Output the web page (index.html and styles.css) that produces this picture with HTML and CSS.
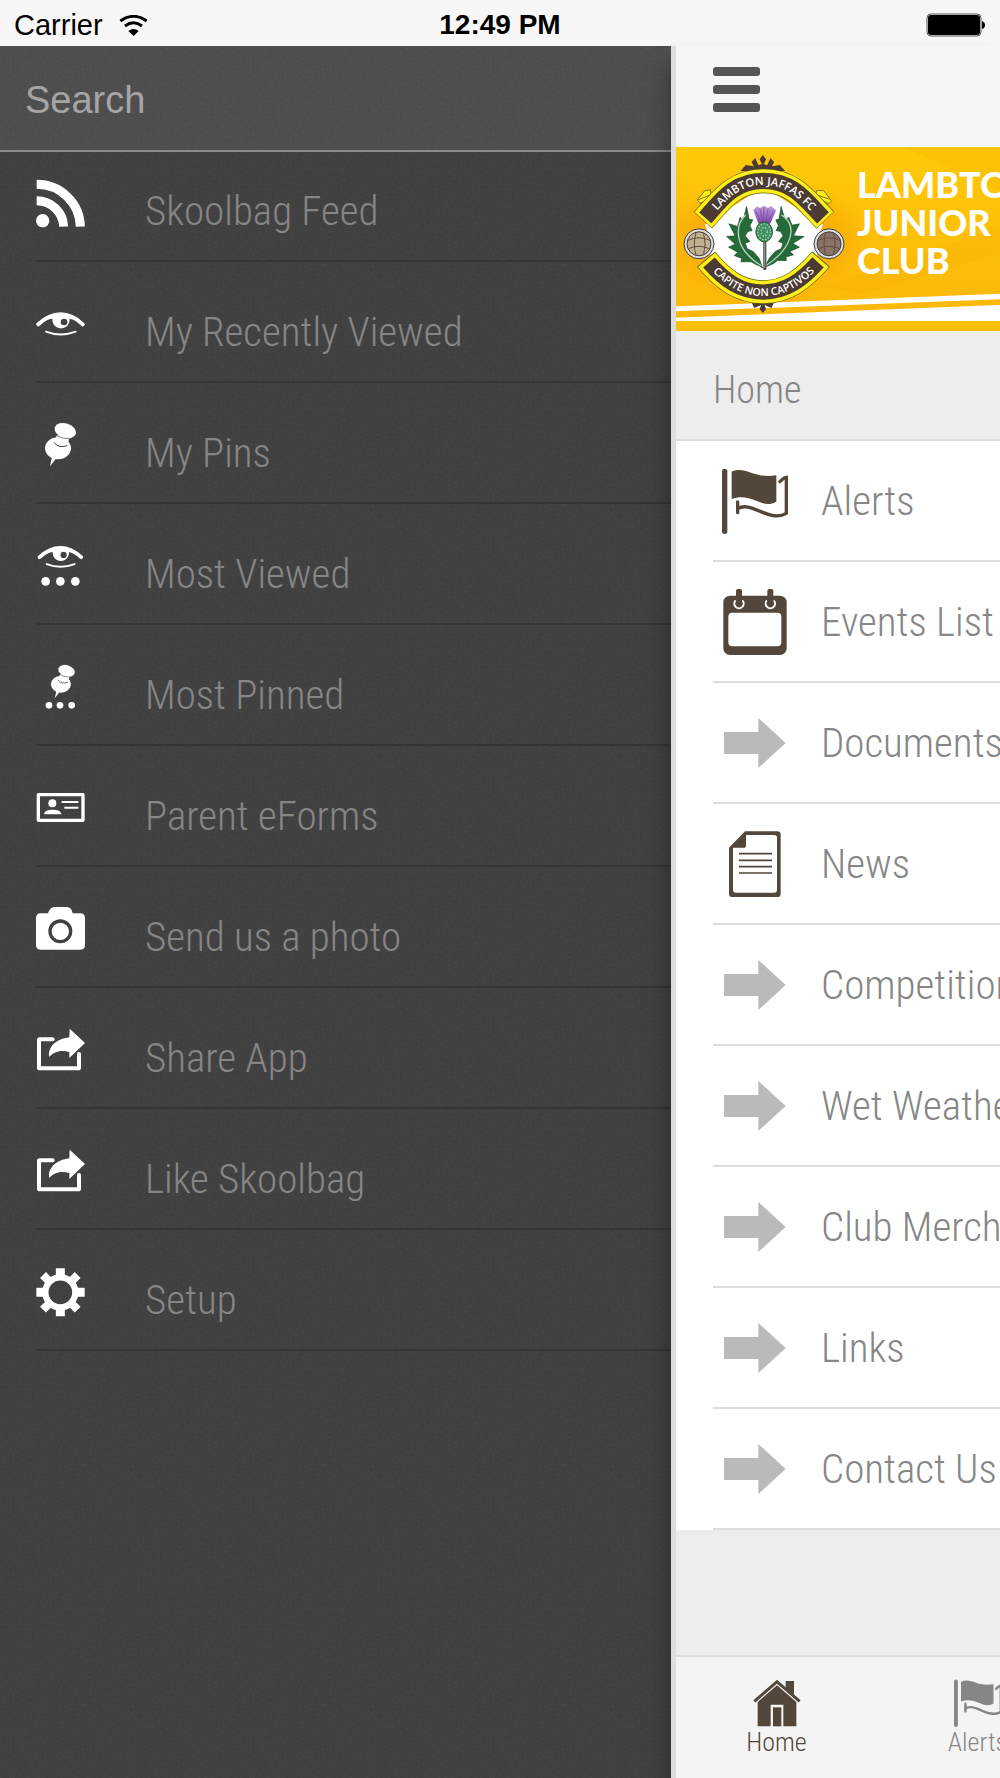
FILE: index.html
```html
<!DOCTYPE html>
<html lang="en">
<head>
    <meta charset="UTF-8">
    <meta name="viewport" content="width=device-width, initial-scale=1.0">
    <title>Skoolbag</title>
    <link rel="stylesheet" href="styles.css">
</head>
<body>

    <!-- Shared icons -->
    <svg class="sprite" aria-hidden="true">
        <symbol id="eye" viewBox="0 0 147 147">
            <path d="M7 73C50 33 98 33 140 73" fill="none" stroke="currentColor" stroke-width="12" stroke-linecap="round"/>
            <path d="M24 62C55 34 92 34 123 62C92 51 55 51 24 62Z" fill="currentColor"/>
            <path fill-rule="evenodd" d="M52 46A26 27 0 1 0 98 46ZM84 56A10 10 0 1 1 84 76A10 10 0 1 1 84 56Z" fill="currentColor"/>
            <path d="M30 95Q74 112 119 95" fill="none" stroke="currentColor" stroke-width="6" stroke-linecap="round"/>
        </symbol>
        <symbol id="pin" viewBox="0 0 147 147">
            <ellipse cx="66" cy="82" rx="39" ry="33" fill="currentColor"/>
            <path d="M48 108L42 136L62 110Z" fill="currentColor"/>
            <path d="M63 42L53 66Q66 86 94 76L100 50Z" fill="currentColor"/>
            <path d="M54 64Q66 83 94 74" fill="none" stroke="#404040" stroke-width="3"/>
            <ellipse cx="88" cy="29" rx="33" ry="22" transform="rotate(18 88 29)" fill="currentColor"/>
            <path d="M61 43Q76 54 100 53" fill="none" stroke="#404040" stroke-width="2"/>
        </symbol>
        <symbol id="share" viewBox="0 0 147 147">
            <path d="M50 40H11Q9 40 9 42V125Q9 127 11 127H127Q129 127 129 125V84" fill="none" stroke="currentColor" stroke-width="12" stroke-linecap="round"/>
            <path d="M101 8L147 51L100 96V78C72 70 52 79 40 93C34 64 60 39 100 34Z" fill="currentColor"/>
        </symbol>
        <symbol id="flag" viewBox="0 0 198 198">
            <path d="M8 10V190" stroke="currentColor" stroke-width="16" stroke-linecap="round"/>
            <path d="M29 11C76 -7 86 32 163 22V101C120 127 90 71 29 93Z" fill="currentColor"/>
            <path d="M47 102V134M47 122C88 96 140 166 193 136V28C183 29 181 34 174 41" fill="none" stroke="currentColor" stroke-width="10" stroke-linecap="round"/>
        </symbol>
        <symbol id="arrow" viewBox="0 0 198 198">
            <path d="M6 66H109V24L191 99L109 174V132H6Z" fill="currentColor"/>
        </symbol>
    </svg>

    <!-- Status bar -->
    <header class="status-bar">
        <div class="carrier">
            <span>Carrier</span>
            <svg class="wifi" viewBox="0 0 87 63">
                <path d="M4 18Q44 -10 83 18" fill="none" stroke="#000" stroke-width="9"/>
                <path d="M18 33Q44 14 69 33" fill="none" stroke="#000" stroke-width="9"/>
                <path d="M28 48Q44 36 59 48L44 63Z"/>
            </svg>
        </div>
        <time>12:49 PM</time>
        <svg class="battery" viewBox="0 0 60 24">
            <rect x="1" y="1" width="54" height="22" rx="4" fill="none" stroke="#555" stroke-width="1"/>
            <rect x="2" y="2" width="52" height="20" rx="3"/>
            <path d="M56 8Q59 9 59 12T56 16Z"/>
        </svg>
    </header>

    <div class="app">

        <!-- Side drawer -->
        <aside class="drawer">
            <form class="search">
                <input type="search" placeholder="Search" aria-label="Search">
            </form>
            <nav class="menu">
                <a href="#">
                    <svg viewBox="0 0 147 147">
                        <circle cx="20" cy="125" r="20" fill="#fff"/>
                        <path d="M2 65A81 81 0 0 1 83 143M2 16A131 129 0 0 1 133 143" fill="none" stroke="#fff" stroke-width="27"/>
                    </svg>
                    <span>Skoolbag Feed</span>
                </a>
                <a href="#">
                    <svg><use href="#eye"/></svg>
                    <span>My Recently Viewed</span>
                </a>
                <a href="#">
                    <svg><use href="#pin"/></svg>
                    <span>My Pins</span>
                </a>
                <a href="#">
                    <svg viewBox="0 0 147 147">
                        <use href="#eye" x="4" y="-23" width="138" height="138"/>
                        <circle cx="29" cy="118" r="13" fill="#fff"/>
                        <circle cx="73" cy="118" r="13" fill="#fff"/>
                        <circle cx="118" cy="118" r="13" fill="#fff"/>
                    </svg>
                    <span>Most Viewed</span>
                </a>
                <a href="#">
                    <svg viewBox="0 0 147 147">
                        <use href="#pin" x="24" y="1" width="113" height="113"/>
                        <circle cx="39" cy="127" r="10" fill="#fff"/>
                        <circle cx="72" cy="127" r="10" fill="#fff"/>
                        <circle cx="107" cy="127" r="10" fill="#fff"/>
                    </svg>
                    <span>Most Pinned</span>
                </a>
                <a href="#">
                    <svg viewBox="0 0 147 147">
                        <rect x="7" y="32" width="134" height="77" rx="1" fill="none" stroke="#fff" stroke-width="10"/>
                        <circle cx="49" cy="58" r="12" fill="#fff"/>
                        <path d="M24 91C25 80 36 77 50 77S75 80 76 91Z" fill="#fff"/>
                        <path d="M77 54H127M85 71H127" stroke="#fff" stroke-width="6"/>
                    </svg>
                    <span>Parent eForms</span>
                </a>
                <a href="#">
                    <svg viewBox="0 0 147 147">
                        <path d="M14 25H36Q42 6 56 6H93Q106 6 110 25H133Q147 25 147 39V120Q147 134 133 134H14Q0 134 0 120V39Q0 25 14 25Z" fill="#fff"/>
                        <circle cx="73" cy="79" r="31" fill="none" stroke="#404040" stroke-width="10"/>
                    </svg>
                    <span>Send us a photo</span>
                </a>
                <a href="#">
                    <svg><use href="#share"/></svg>
                    <span>Share App</span>
                </a>
                <a href="#">
                    <svg><use href="#share"/></svg>
                    <span>Like Skoolbag</span>
                </a>
                <a href="#">
                    <svg viewBox="0 0 147 147">
                        <circle cx="73" cy="73" r="45" fill="none" stroke="#fff" stroke-width="19"/>
                        <path d="M73 1V24M73 122V145M1 73H24M122 73H146" stroke="#fff" stroke-width="27"/>
                        <path d="M21 21L40 40M106 106L125 125M125 21L106 40M40 106L21 125" stroke="#fff" stroke-width="25"/>
                    </svg>
                    <span>Setup</span>
                </a>
            </nav>
        </aside>

        <!-- Main page, pushed to the right -->
        <main class="page">
            <div class="toolbar">
                <button class="menu-button" type="button" aria-label="Menu">
                    <i></i><i></i><i></i>
                </button>
            </div>

            <div class="banner">
                <svg class="banner-back" viewBox="0 0 972 552" preserveAspectRatio="none">
                    <defs>
                        <linearGradient id="gold" x1="0" y1="0" x2="0" y2="1">
                            <stop offset="0" stop-color="#fec907"/>
                            <stop offset="1" stop-color="#fbb60a"/>
                        </linearGradient>
                        <radialGradient id="glow" cx="0.27" cy="0.5" r="0.34">
                            <stop offset="0.5" stop-color="#f79a08" stop-opacity="0.7"/>
                            <stop offset="1" stop-color="#f9a408" stop-opacity="0"/>
                        </radialGradient>
                    </defs>
                    <rect width="972" height="552" fill="url(#gold)"/>
                    <rect width="972" height="552" fill="url(#glow)"/>
                    <path d="M440 420L972 240V320L560 440Z" fill="#f6a800" opacity="0.2"/>
                    <path d="M680 0L972 130V0Z" fill="#f6b400" opacity="0.25"/>
                    <path d="M0 478L972 440V457L0 493Z" fill="#fff"/>
                    <path d="M0 512L972 474V523H0Z" fill="#fff"/>
                    <rect y="523" width="972" height="29" fill="#fdbf07"/>
                </svg>

                <svg class="crest" viewBox="40 45 485 475" role="img" aria-label="Lambton Jaffas FC crest">
                    <defs>
                        <path id="motto-top" d="M104 254C160 195 195 135 281 135S402 195 462 254"/>
                        <path id="motto-bottom" d="M112 378C160 432 210 469 281 469S400 432 452 378"/>
                        <linearGradient id="bloom" x1="0" y1="0" x2="0" y2="1">
                            <stop offset="0" stop-color="#c3a3dc"/>
                            <stop offset="1" stop-color="#7a3fa3"/>
                        </linearGradient>
                    </defs>
                    <!-- finials -->
                    <g fill="#4c3b33">
                        <path d="M279 45L289 58L282 72L292 76L302 54L313 66L306 79L330 75L346 92L279 100L212 92L228 75L252 79L245 66L256 54L266 76L276 72L269 58Z"/>
                        <path d="M279 520L289 508L284 496L305 505L312 490H246L253 505L274 496L269 508Z"/>
                    </g>
                    <!-- scroll ends -->
                    <g fill="#fdf01a" stroke="#8a7411" stroke-width="3">
                        <path d="M82 180L105 152L122 150L124 172L112 194L92 192Z"/>
                        <path d="M486 184L462 152L440 152L438 174L454 194L476 192Z"/>
                    </g>
                    <path d="M84 180L118 166M90 190L120 178M480 178L444 166M476 190L448 178" stroke="#8a7411" stroke-width="3"/>
                    <!-- shield -->
                    <path d="M105 255L280 140L460 255L438 310L445 365L280 440L118 365L126 310Z" fill="#fff"/>
                    <path d="M99 241C150 185 190 123 281 123S412 185 467 241" fill="none" stroke="#6b6411" stroke-width="74"/>
                    <path d="M100 240C150 185 190 123 281 123S412 185 466 240" fill="none" stroke="#fdf01a" stroke-width="70"/>
                    <path d="M106 234C152 183 190 123 281 123S410 183 460 234" fill="none" stroke="#4c3b33" stroke-width="49"/>
                    <path d="M108 358C160 420 210 457 280 457S400 420 454 358" fill="none" stroke="#6b6411" stroke-width="71"/>
                    <path d="M110 360C160 420 210 457 280 457S400 420 452 360" fill="none" stroke="#fdf01a" stroke-width="67"/>
                    <path d="M117 368C164 422 212 457 280 457S396 422 445 368" fill="none" stroke="#4c3b33" stroke-width="46"/>
                    <text class="motto" font-size="34" text-anchor="middle"><textPath href="#motto-top" startOffset="50%">LAMBTON JAFFAS FC</textPath></text>
                    <text class="motto" font-size="32" text-anchor="middle"><textPath href="#motto-bottom" startOffset="50%">CAPITE NON CAPTIVOS</textPath></text>
                    <!-- footballs -->
                    <g stroke="#3e3a3a" stroke-width="3">
                        <circle cx="87" cy="312" r="45" fill="#ddd"/>
                        <circle cx="87" cy="312" r="36" fill="#c2b190"/>
                        <circle cx="478" cy="312" r="45" fill="#ddd"/>
                        <circle cx="478" cy="312" r="36" fill="#8c7266"/>
                        <path d="M53 302Q87 286 121 302M55 327Q87 312 119 327M78 278Q68 312 78 346M101 280Q110 312 101 344M444 302Q478 286 512 302M446 327Q478 312 510 327M468 278Q458 312 468 346M492 280Q501 312 492 344" fill="none" stroke="#5d4d42" stroke-width="3"/>
                    </g>
                    <!-- thistle -->
                    <g fill="#256b39" stroke="#174625" stroke-width="2">
                        <path d="M278 385C268 376 256 375 244 366L213 366L216 356L193 347L204 337L176 322L196 313L170 290L196 288L177 252L203 260L211 232L220 241L230 200L238 238L249 240L240 258L247 272L234 275L226 288L240 305L226 310L232 327L250 335L268 356Z"/>
                        <path d="M284 385C294 376 312 375 322 362L350 362L348 352L371 345L360 335L389 322L369 311L403 290L371 288L389 252L367 256L357 232L346 241L334 200L328 238L318 240L326 258L319 272L332 275L340 288L326 305L340 310L334 327L316 335L298 356Z"/>
                    </g>
                    <path d="M274 378Q215 340 207 295T228 225M288 378Q346 340 360 295T335 225" fill="none" stroke="#b9d3bb" stroke-width="4"/>
                    <path d="M285 390V305" stroke="#333" stroke-width="9"/>
                    <path d="M285 385V305" stroke="#bbb" stroke-width="3"/>
                    <path d="M250 210L262 199L270 204L282 197L294 204L304 198L319 212L301 252H266Z" fill="url(#bloom)"/>
                    <path d="M257 214L275 248M270 206L280 248M282 203V248M295 206L287 248M311 214L293 248" stroke="#8950b0" stroke-width="3"/>
                    <ellipse cx="283" cy="276" rx="25" ry="30" fill="#3f8f60" stroke="#1d5a36" stroke-width="3"/>
                    <ellipse cx="283" cy="276" rx="19" ry="24" fill="none" stroke="#a9dab8" stroke-width="4" stroke-dasharray="4 5"/>
                    <ellipse cx="283" cy="276" rx="9" ry="13" fill="none" stroke="#a9dab8" stroke-width="4" stroke-dasharray="4 5"/>
                </svg>

                <h1>LAMBTON<br>JUNIOR<br>CLUB</h1>
            </div>

            <h2>Home</h2>

            <nav class="list">
                <a class="dark" href="#">
                    <svg><use href="#flag"/></svg>
                    <span>Alerts</span>
                </a>
                <a class="dark" href="#">
                    <svg viewBox="0 0 198 198">
                        <rect x="4" y="20" width="190" height="178" rx="20" fill="currentColor"/>
                        <rect x="19" y="71" width="159" height="101" rx="12" fill="#fff"/>
                        <path d="M41 34A14 14 0 1 0 61 34M135 34A14 14 0 1 0 155 34" fill="none" stroke="#fff" stroke-width="6"/>
                        <rect x="42" y="0" width="18" height="51" rx="6" fill="currentColor"/>
                        <rect x="136" y="0" width="18" height="51" rx="6" fill="currentColor"/>
                    </svg>
                    <span>Events List</span>
                </a>
                <a href="#">
                    <svg><use href="#arrow"/></svg>
                    <span>Documents</span>
                </a>
                <a class="dark" href="#">
                    <svg viewBox="0 0 198 198">
                        <path fill-rule="evenodd" d="M69 1H166Q176 1 176 11V188Q176 198 166 198H31Q21 198 21 188V50ZM72 12V44Q72 50 67 50H33V176Q33 185 42 185H157Q165 185 165 176V20Q165 12 157 12Z" fill="currentColor"/>
                        <path d="M51 68H150M51 88H150M51 107H150M51 126H150" stroke="currentColor" stroke-width="5"/>
                    </svg>
                    <span>News</span>
                </a>
                <a href="#">
                    <svg><use href="#arrow"/></svg>
                    <span>Competitions</span>
                </a>
                <a href="#">
                    <svg><use href="#arrow"/></svg>
                    <span>Wet Weather</span>
                </a>
                <a href="#">
                    <svg><use href="#arrow"/></svg>
                    <span>Club Merchandise</span>
                </a>
                <a href="#">
                    <svg><use href="#arrow"/></svg>
                    <span>Links</span>
                </a>
                <a href="#">
                    <svg><use href="#arrow"/></svg>
                    <span>Contact Us</span>
                </a>
            </nav>

            <nav class="tabs">
                <a class="dark" href="#">
                    <svg viewBox="0 0 144 144">
                        <path d="M4 67L72 8L140 67" fill="none" stroke="currentColor" stroke-width="9"/>
                        <path d="M98 6H123V50L98 28Z" fill="currentColor"/>
                        <path d="M72 19L130 69V142H91V77H53V142H14V69Z" fill="currentColor"/>
                        <rect x="60" y="85" width="25" height="57" fill="currentColor"/>
                    </svg>
                    <span>Home</span>
                </a>
                <a href="#">
                    <svg><use href="#flag"/></svg>
                    <span>Alerts</span>
                </a>
            </nav>
        </main>
    </div>

</body>
</html>
```
FILE: styles.css
```css
* {
    box-sizing: border-box;
}

body {
    margin: 0;
    min-height: 100vh;
    display: flex;
    flex-direction: column;
    overflow-x: hidden;
    background: #f7f7f7;
    font-family: "Roboto Condensed", Roboto, sans-serif;
    font-weight: 300;
    color: #868686;
}

a {
    color: inherit;
    text-decoration: none;
}

.sprite {
    display: none;
}

/* Status bar */
.status-bar {
    display: grid;
    grid-template-columns: 1fr auto 1fr;
    align-items: center;
    height: 46px;
    padding: 4px 14px 0;
    font-family: "Liberation Sans", Arial, sans-serif;
    font-size: 28px;
    font-weight: 400;
    line-height: 32px;
    color: #000;
}

.status-bar time {
    font-weight: 700;
}

.carrier {
    display: flex;
    align-items: center;
    gap: 16px;
    font-size: 29px;
}

.wifi {
    width: 29px;
    height: 21px;
}

.battery {
    width: 60px;
    height: 24px;
    justify-self: end;
}

.app {
    flex: 1;
    display: flex;
}

/* Side drawer */
.drawer {
    flex: 0 0 67.1%;
    background-color: #3c3c3c;
    background-image: url("data:image/svg+xml,%3Csvg xmlns='http://www.w3.org/2000/svg' width='240' height='240'%3E%3Cfilter id='n'%3E%3CfeTurbulence type='fractalNoise' baseFrequency='0.4' numOctaves='2' stitchTiles='stitch'/%3E%3C/filter%3E%3Crect width='240' height='240' filter='url(%23n)' opacity='0.08'/%3E%3C/svg%3E");
}

.search {
    height: 106px;
    border-bottom: 2px solid #8c8c8c;
    background: rgba(255, 255, 255, 0.07);
}

.search input {
    width: 100%;
    height: 100%;
    padding: 4px 25px 0;
    border: 0;
    outline: 0;
    appearance: none;
    background: none;
    font: 38px "Liberation Sans", Arial, sans-serif;
    color: #fff;
}

.search input::placeholder {
    color: #a5a5a5;
}

.menu {
    margin-top: -11px;
    padding-left: 36px;
}

.menu a,
.list a {
    display: flex;
    align-items: center;
    height: 121px;
    border-bottom: 2px solid #353535;
    font-size: 41px;
    line-height: 48px;
    white-space: nowrap;
}

.menu a {
    padding-top: 6px;
}

.menu svg {
    flex: none;
    width: 49px;
    height: 49px;
    color: #fff;
}

.menu span {
    padding: 14px 0 0 60px;
}

/* Main page */
.page {
    position: relative;
    flex: 1;
    min-width: 0;
    display: flex;
    flex-direction: column;
    border-left: 5px solid #ddd;
    background: #ededed;
    box-shadow: -4px 20px 24px rgba(0, 0, 0, 0.3);
}

.toolbar {
    height: 101px;
    padding: 21px 37px;
    background: #f7f7f7;
}

.menu-button {
    display: flex;
    flex-direction: column;
    gap: 9px;
    width: 47px;
    padding: 0;
    border: 0;
    background: none;
}

.menu-button i {
    height: 9px;
    border-radius: 3px;
    background: #555;
}

.banner {
    position: relative;
    display: flex;
    align-items: flex-start;
    gap: 12px;
    height: 184px;
    padding: 8px 0 0 7px;
    overflow: hidden;
}

.banner-back {
    position: absolute;
    inset: 0;
    width: 100%;
    height: 100%;
}

.crest {
    position: relative;
    flex: none;
    width: 162px;
    height: 158px;
}

.motto {
    font-family: "Open Sans", sans-serif;
    font-weight: 600;
    fill: #fff;
}

.banner h1 {
    position: relative;
    margin: 10px 0 0;
    font-family: Lato, sans-serif;
    font-size: 36px;
    font-weight: 900;
    line-height: 38px;
    color: #fff;
}

.page h2 {
    height: 110px;
    margin: 0;
    padding: 37px 37px 0;
    border-bottom: 2px solid #ddd;
    font-size: 38px;
    font-weight: 300;
    line-height: 44px;
}

.list {
    padding-left: 37px;
    overflow: hidden;
    background: #fff;
}

.list a {
    border-color: #ddd;
}

.list svg {
    flex: none;
    width: 66px;
    height: 66px;
    margin-left: 9px;
    color: #bababa;
}

.list span {
    padding-left: 33px;
}

.list .dark svg,
.tabs .dark {
    color: #52473a;
}

/* Bottom tabs */
.tabs {
    display: flex;
    height: 123px;
    margin-top: auto;
    border-top: 2px solid #ddd;
    overflow: hidden;
    background: #f4f4f4;
}

.tabs a {
    flex: 0 0 201px;
    display: flex;
    flex-direction: column;
    align-items: center;
    padding-top: 22px;
    font-size: 26px;
    line-height: 30px;
}

.tabs svg {
    width: 48px;
    height: 48px;
}
```
